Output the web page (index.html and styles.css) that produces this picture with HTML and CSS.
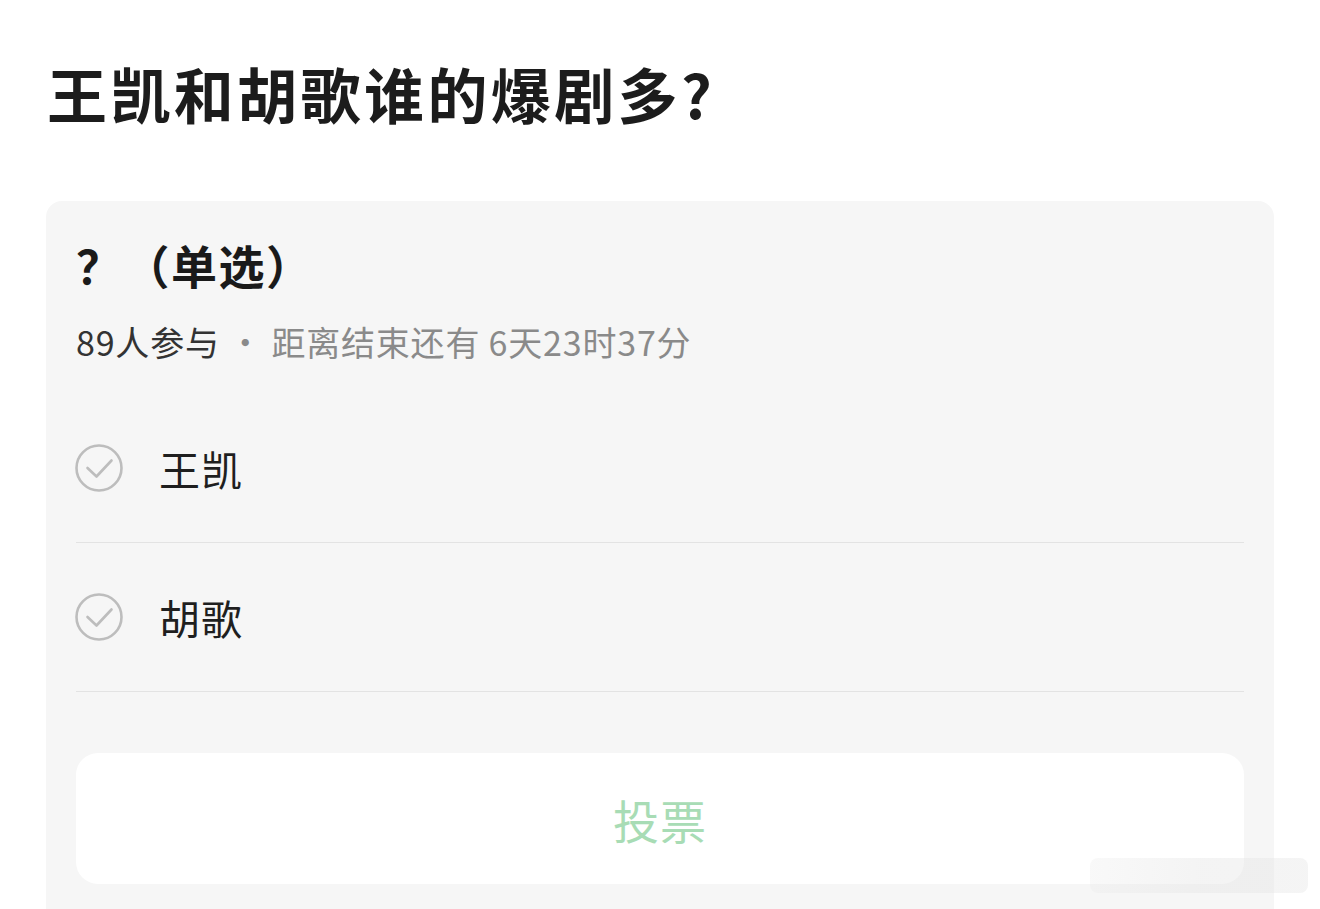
FILE: index.html
```html
<!DOCTYPE html>
<html lang="zh">
<head>
<meta charset="utf-8">
<title>投票</title>
<link rel="stylesheet" href="styles.css">
</head>
<body>
<div class="page">
  <h1 class="title">王凯和胡歌谁的爆剧多?</h1>
  <div class="card">
    <div class="q">？（单选）</div>
    <div class="meta"><span class="dark">89人参与</span> · 距离结束还有 6天23时37分</div>
    <div class="options">
      <div class="opt">
        <svg class="chk" viewBox="0 0 48 48" width="48" height="48"><circle cx="24" cy="24" r="22.5" fill="none" stroke="#bdbdbd" stroke-width="2.6"/><path d="M12.5 24 L21.5 32.5 L36.5 16.5" fill="none" stroke="#bdbdbd" stroke-width="2.6" stroke-linecap="round" stroke-linejoin="round"/></svg>
        <span class="label">王凯</span>
      </div>
      <div class="opt">
        <svg class="chk" viewBox="0 0 48 48" width="48" height="48"><circle cx="24" cy="24" r="22.5" fill="none" stroke="#bdbdbd" stroke-width="2.6"/><path d="M12.5 24 L21.5 32.5 L36.5 16.5" fill="none" stroke="#bdbdbd" stroke-width="2.6" stroke-linecap="round" stroke-linejoin="round"/></svg>
        <span class="label">胡歌</span>
      </div>
    </div>
    <div class="btn">投票</div>
  </div>
  <div class="wm"></div>
</div>
</body>
</html>
```
FILE: styles.css
```css
html, body {
  margin: 0;
  padding: 0;
  background: #ffffff;
}
body {
  font-family: "Noto Sans CJK SC", "Noto Sans", sans-serif;
  color: #1a1a1a;
  width: 1320px;
  height: 909px;
  overflow: hidden;
}
.page {
  position: relative;
  height: 909px;
  overflow: hidden;
}
.title {
  margin: 0;
  padding: 57px 0 0 47px;
  font-size: 60px;
  line-height: 72px;
  font-weight: 700;
  letter-spacing: 3.4px;
  color: #1c1c1c;
}
.card {
  box-sizing: border-box;
  margin: 72px 46px 0 46px;
  background: #f6f6f6;
  border-radius: 16px 16px 0 0;
  padding: 36px 30px 0 30px;
  height: 708px;
}
.q {
  font-size: 46px;
  line-height: 55px;
  font-weight: 700;
  letter-spacing: 1.5px;
  color: #1a1a1a;
}
.meta {
  margin-top: 28px;
  font-size: 34px;
  line-height: 44px;
  letter-spacing: 0.8px;
  color: #8a8a8a;
}
.meta .dark {
  color: #333333;
}
.options {
  margin-top: 30px;
}
.opt {
  display: flex;
  align-items: center;
  height: 148px;
  border-bottom: 1px solid #e3e3e3;
}
.chk {
  flex: none;
  margin-left: -1px;
}
.label {
  margin-left: 36px;
  font-size: 41px;
  letter-spacing: 1px;
  color: #1f1f1f;
}
.btn {
  margin-top: 61px;
  height: 131px;
  background: #ffffff;
  border-radius: 22px;
  display: flex;
  align-items: center;
  justify-content: center;
  font-size: 46px;
  color: #a8dcb5;
  letter-spacing: 1px;
}
.wm {
  position: absolute;
  left: 1090px;
  top: 858px;
  width: 218px;
  height: 35px;
  border-radius: 8px;
  background: linear-gradient(90deg, rgba(230,230,230,0.25), rgba(230,230,230,0.45) 50%, rgba(225,225,225,0.35));
}
```
